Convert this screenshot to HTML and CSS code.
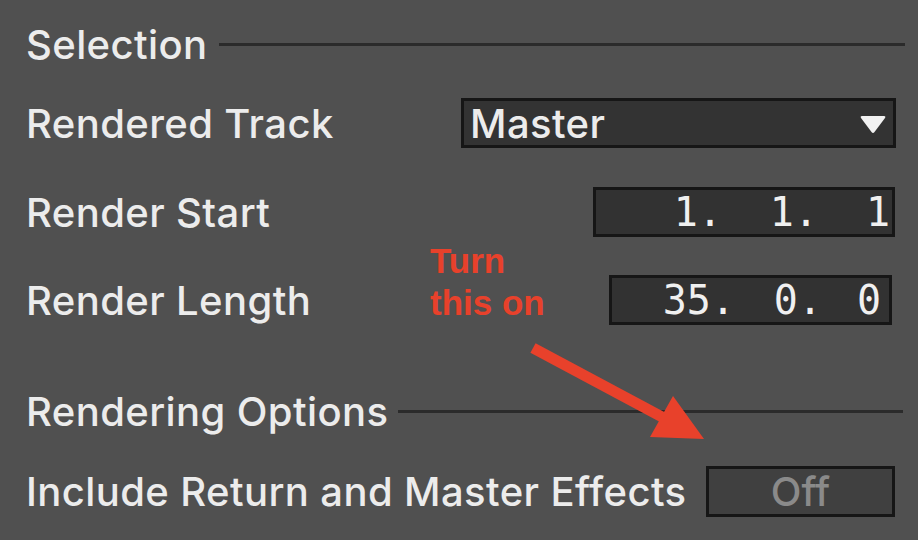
FILE: index.html
```html
<!DOCTYPE html>
<html>
<head>
<meta charset="utf-8">
<link rel="stylesheet" href="styles.css">
</head>
<body>
<div class="panel">
  <div class="section s1">
    <span class="section-title">Selection</span>
    <span class="rule"></span>
  </div>
  <div class="row r-track">
    <span class="label">Rendered Track</span>
    <div class="dropdown">
      <span class="dd-text">Master</span>
      <svg class="dd-arrow" width="28" height="20" viewBox="0 0 28 20"><path d="M3 2 L25 2 Q27 2 26 4 L15.5 18 Q14 20 12.5 18 L2 4 Q1 2 3 2 Z" fill="#f2f2f2"/></svg>
    </div>
  </div>
  <div class="row r-start">
    <span class="label">Render Start</span>
    <div class="field f-start"><span class="seg a">1.</span><span class="seg b">1.</span><span class="seg c">1</span></div>
  </div>
  <div class="row r-length">
    <span class="label">Render Length</span>
    <div class="field f-length"><span class="seg a">35.</span><span class="seg b">0.</span><span class="seg c">0</span></div>
  </div>
  <div class="section s2">
    <span class="section-title">Rendering Options</span>
    <span class="rule"></span>
  </div>
  <div class="row r-include">
    <span class="label">Include Return and Master Effects</span>
    <div class="toggle">Off</div>
  </div>

  <div class="note">Turn<br>this on</div>
  <svg class="arrow" width="918" height="540" viewBox="0 0 918 540">
    <line x1="533" y1="348" x2="664" y2="418" stroke="#e8412b" stroke-width="11"/>
    <polygon points="650,437 673,396 704,439" fill="#e8412b"/>
  </svg>
</div>
</body>
</html>
```

FILE: styles.css
```css
* { box-sizing: border-box; }
html, body {
  margin: 0;
  padding: 0;
  background: #505050;
}
.panel {
  position: relative;
  width: 918px;
  height: 540px;
  padding: 20px 13px 0 26px;
  display: flex;
  flex-direction: column;
  font-family: Inter, "Noto Sans", sans-serif;
  font-weight: 500;
  color: #ececec;
  overflow: hidden;
}
.section {
  display: flex;
  align-items: center;
  height: 48px;
}
.section-title {
  font-size: 40px;
  letter-spacing: 0.4px;
  white-space: nowrap;
}
.rule {
  flex: 1;
  height: 3px;
  background: #2b2b2b;
  margin-left: 11px;
}
.s2 { margin-top: 62px; }
.s2 .rule { margin-left: 10px; margin-right: 2px; }
.row {
  display: flex;
  align-items: center;
  justify-content: space-between;
  height: 50px;
}
.label {
  font-size: 40px;
  letter-spacing: 0.4px;
  white-space: nowrap;
}
.r-track { margin-top: 30px; }
.r-start { margin-top: 39px; }
.r-length { margin-top: 38px; }
.r-include { margin-top: 31px; height: 51px; }

.dropdown {
  width: 435px;
  height: 50px;
  margin-right: 9px;
  background: #333333;
  border: 3px solid #161616;
  display: flex;
  align-items: center;
  justify-content: space-between;
  padding: 0 6px 0 6px;
}
.dd-text { font-size: 40px; letter-spacing: 0.4px; }
.dd-arrow { margin-top: 2px; }

.field {
  height: 50px;
  background: #323232;
  border: 3px solid #161616;
  display: flex;
  justify-content: flex-end;
  align-items: center;
  font-family: "DejaVu Sans Mono", monospace;
  font-weight: 400;
  font-size: 40px;
  color: #f0f0f0;
}
.seg {
  text-align: right;
  white-space: pre;
}
.f-start { width: 302px; margin-right: 10px; padding-right: 2px; }
.f-start .b { width: 96px; }
.f-start .c { width: 72px; }
.f-length { width: 283px; margin-right: 13px; padding-right: 8px; }
.f-length .b { width: 87px; }
.f-length .c { width: 59px; }

.toggle {
  width: 189px;
  height: 51px;
  margin-right: 10px;
  background: #404040;
  border: 3px solid #161616;
  display: flex;
  align-items: center;
  justify-content: center;
  font-size: 40px;
  color: #8a8a8a;
}

.note {
  position: absolute;
  left: 430px;
  top: 240px;
  font-family: "Liberation Sans", Arial, sans-serif;
  font-weight: 700;
  font-size: 35px;
  line-height: 42px;
  color: #e8412b;
}
.arrow {
  position: absolute;
  left: 0;
  top: 0;
  pointer-events: none;
}
```
